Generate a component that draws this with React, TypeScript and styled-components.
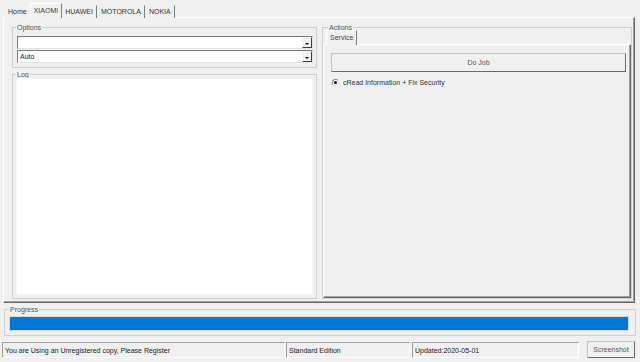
import styled, { createGlobalStyle } from 'styled-components'

const GlobalStyle = createGlobalStyle`
  * { box-sizing: border-box; }
  html, body { margin: 0; padding: 0; background: #f0f0f0; }
  body {
    font-family: "Liberation Sans", Arial, sans-serif;
    font-size: 7px;
    color: #222;
  }
`

const Window = styled.div`
  width: 640px;
  height: 362px;
  display: flex;
  flex-direction: column;
  overflow: hidden;
`

const TabStrip = styled.div<{ $indent: number; $height: number }>`
  display: flex;
  align-items: flex-end;
  height: ${(p) => p.$height}px;
  padding-left: ${(p) => p.$indent}px;
  flex-shrink: 0;
`

const Tab = styled.div<{ $active?: boolean }>`
  position: relative;
  height: ${(p) => (p.$active ? 15 : 13)}px;
  line-height: ${(p) => (p.$active ? 13 : 12)}px;
  padding: 0 ${(p) => (p.$active ? 3 : 3)}px;
  margin: 0 ${(p) => (p.$active ? -1 : 0)}px -1px;
  z-index: ${(p) => (p.$active ? 2 : 1)};
  background: #f0f0f0;
  color: ${(p) => (p.$active ? '#444' : '#333')};
  border-top: 1px solid ${(p) => (p.$active ? '#fff' : 'transparent')};
  border-left: 1px solid ${(p) => (p.$active ? '#fff' : 'transparent')};
  border-right: 1px solid #808080;
  white-space: nowrap;
`

const TabPage = styled.div`
  margin: 0 5px 0 3px;
  height: 286px;
  border: 1px solid;
  border-color: #fff #696969 #696969 #fff;
  box-shadow: inset -1px -1px 0 #a0a0a0;
  padding: 6px 2px 3px 8px;
  display: flex;
  gap: 5px;
`

const LeftColumn = styled.div`
  width: 305px;
  display: flex;
  flex-direction: column;
  gap: 3px;
`

const Group = styled.fieldset<{ $height?: number; $pad: string }>`
  margin: 0;
  min-width: 0;
  border: 1px solid #d0d0d0;
  padding: ${(p) => p.$pad};
  display: flex;
  flex-direction: column;
  ${(p) => (p.$height ? `height: ${p.$height}px; flex-shrink: 0;` : 'flex: 1;')}
`

const Legend = styled.legend<{ $offset: number }>`
  padding: 0 1px;
  margin-left: ${(p) => p.$offset}px;
  line-height: 7px;
  font-size: 7px;
  color: #555;
`

const Combo = styled.div`
  height: 13px;
  background: #fff;
  border: 1px solid;
  border-color: #7a7a7a #e3e3e3 #e3e3e3 #7a7a7a;
  display: flex;
  align-items: center;
  padding-left: 2px;
  color: #222;
  & + & { margin-top: 1px; }
`

const ComboText = styled.span`
  flex: 1;
`

const ComboArrow = styled.div`
  width: 10px;
  height: 11px;
  border: 1px solid;
  border-color: #f4f4f4 #404040 #404040 #f4f4f4;
  background: #f0f0f0;
  display: flex;
  align-items: center;
  justify-content: center;
  &::after {
    content: '';
    border-left: 2px solid transparent;
    border-right: 2px solid transparent;
    border-top: 2px solid #000;
    margin-top: 2px;
  }
`

const LogArea = styled.div`
  flex: 1;
  background: #fff;
  border: 1px solid #f6f6f6;
`

const RightColumn = styled.div`
  flex: 1;
  display: flex;
  flex-direction: column;
`

const ServicePage = styled.div`
  flex: 1;
  border: 1px solid;
  border-color: #fff #696969 #696969 #fff;
  box-shadow: inset -1px -1px 0 #a0a0a0;
  padding: 8px 4px 0 7px;
  display: flex;
  flex-direction: column;
`

const Button = styled.div<{ $height: number }>`
  height: ${(p) => p.$height}px;
  border: 1px solid;
  border-color: #c4c4c4 #696969 #696969 #c4c4c4;
  background: #f0f0f0;
  color: #555;
  display: flex;
  align-items: center;
  justify-content: center;
  white-space: nowrap;
`

const RadioRow = styled.div`
  margin-top: 6px;
  height: 9px;
  display: flex;
  align-items: center;
  gap: 4px;
  padding-left: 1px;
  color: #333;
`

const Radio = styled.span`
  width: 7px;
  height: 7px;
  border-radius: 50%;
  border: 1px solid #888;
  border-bottom-color: #ddd;
  border-right-color: #ddd;
  background: #fff;
  display: flex;
  align-items: center;
  justify-content: center;
  &::after {
    content: '';
    width: 3px;
    height: 3px;
    border-radius: 50%;
    background: #111;
  }
`

const ProgressGroup = styled.fieldset`
  margin: 3px 4px 0 4px;
  min-width: 0;
  height: 30px;
  border: 1px solid #d0d0d0;
  padding: 3px 6px 0 4px;
`

const ProgressFrame = styled.div`
  height: 15px;
  border: 1px solid #d8d8d8;
  background: #e6e6e6;
`

const ProgressFill = styled.div`
  height: 100%;
  background: #0078d7;
`

const StatusBar = styled.div`
  margin-top: 6px;
  height: 16px;
  padding-left: 2px;
  display: flex;
  align-items: stretch;
`

const StatusPanel = styled.div<{ $width: number; $gap?: number }>`
  width: ${(p) => p.$width}px;
  margin-left: ${(p) => p.$gap ?? 0}px;
  border: 1px solid;
  border-color: #a0a0a0 #fff #fff #a0a0a0;
  padding-left: 2px;
  display: flex;
  align-items: center;
  color: #1a1a1a;
  white-space: nowrap;
  overflow: hidden;
`

const StatusButton = styled(Button)`
  width: 48px;
  margin-left: 8px;
  margin-top: -1px;
`

const tabs = ['Home', 'XIAOMI', 'HUAWEI', 'MOTOROLA', 'NOKIA']

function App() {
  return (
    <Window>
      <GlobalStyle />
      <TabStrip $indent={4} $height={17}>
        {tabs.map((t) => (
          <Tab key={t} $active={t === 'XIAOMI'}>
            {t}
          </Tab>
        ))}
      </TabStrip>
      <TabPage>
        <LeftColumn>
          <Group $height={44} $pad="5px 3px 2px 4px">
            <Legend $offset={-1}>Options</Legend>
            <Combo>
              <ComboText />
              <ComboArrow />
            </Combo>
            <Combo>
              <ComboText>Auto</ComboText>
              <ComboArrow />
            </Combo>
          </Group>
          <Group $pad="0 3px 3px 3px">
            <Legend $offset={0}>Log</Legend>
            <LogArea />
          </Group>
        </LeftColumn>
        <RightColumn>
          <Group $pad="0">
            <Legend $offset={5}>Actions</Legend>
            <TabStrip $indent={4} $height={13}>
              <Tab $active>Service</Tab>
            </TabStrip>
            <ServicePage>
              <Button $height={19}>Do Job</Button>
              <RadioRow>
                <Radio />
                cRead Information + Fix Security
              </RadioRow>
            </ServicePage>
          </Group>
        </RightColumn>
      </TabPage>
      <ProgressGroup>
        <Legend $offset={0}>Progress</Legend>
        <ProgressFrame>
          <ProgressFill style={{ width: '100%' }} />
        </ProgressFrame>
      </ProgressGroup>
      <StatusBar>
        <StatusPanel $width={283}>You are Using an Unregistered copy, Please Register</StatusPanel>
        <StatusPanel $width={124} $gap={1}>Standard Edition</StatusPanel>
        <StatusPanel $width={167} $gap={2}>Updated:2020-05-01</StatusPanel>
        <StatusButton $height={17}>Screenshot</StatusButton>
      </StatusBar>
    </Window>
  )
}

export default App
